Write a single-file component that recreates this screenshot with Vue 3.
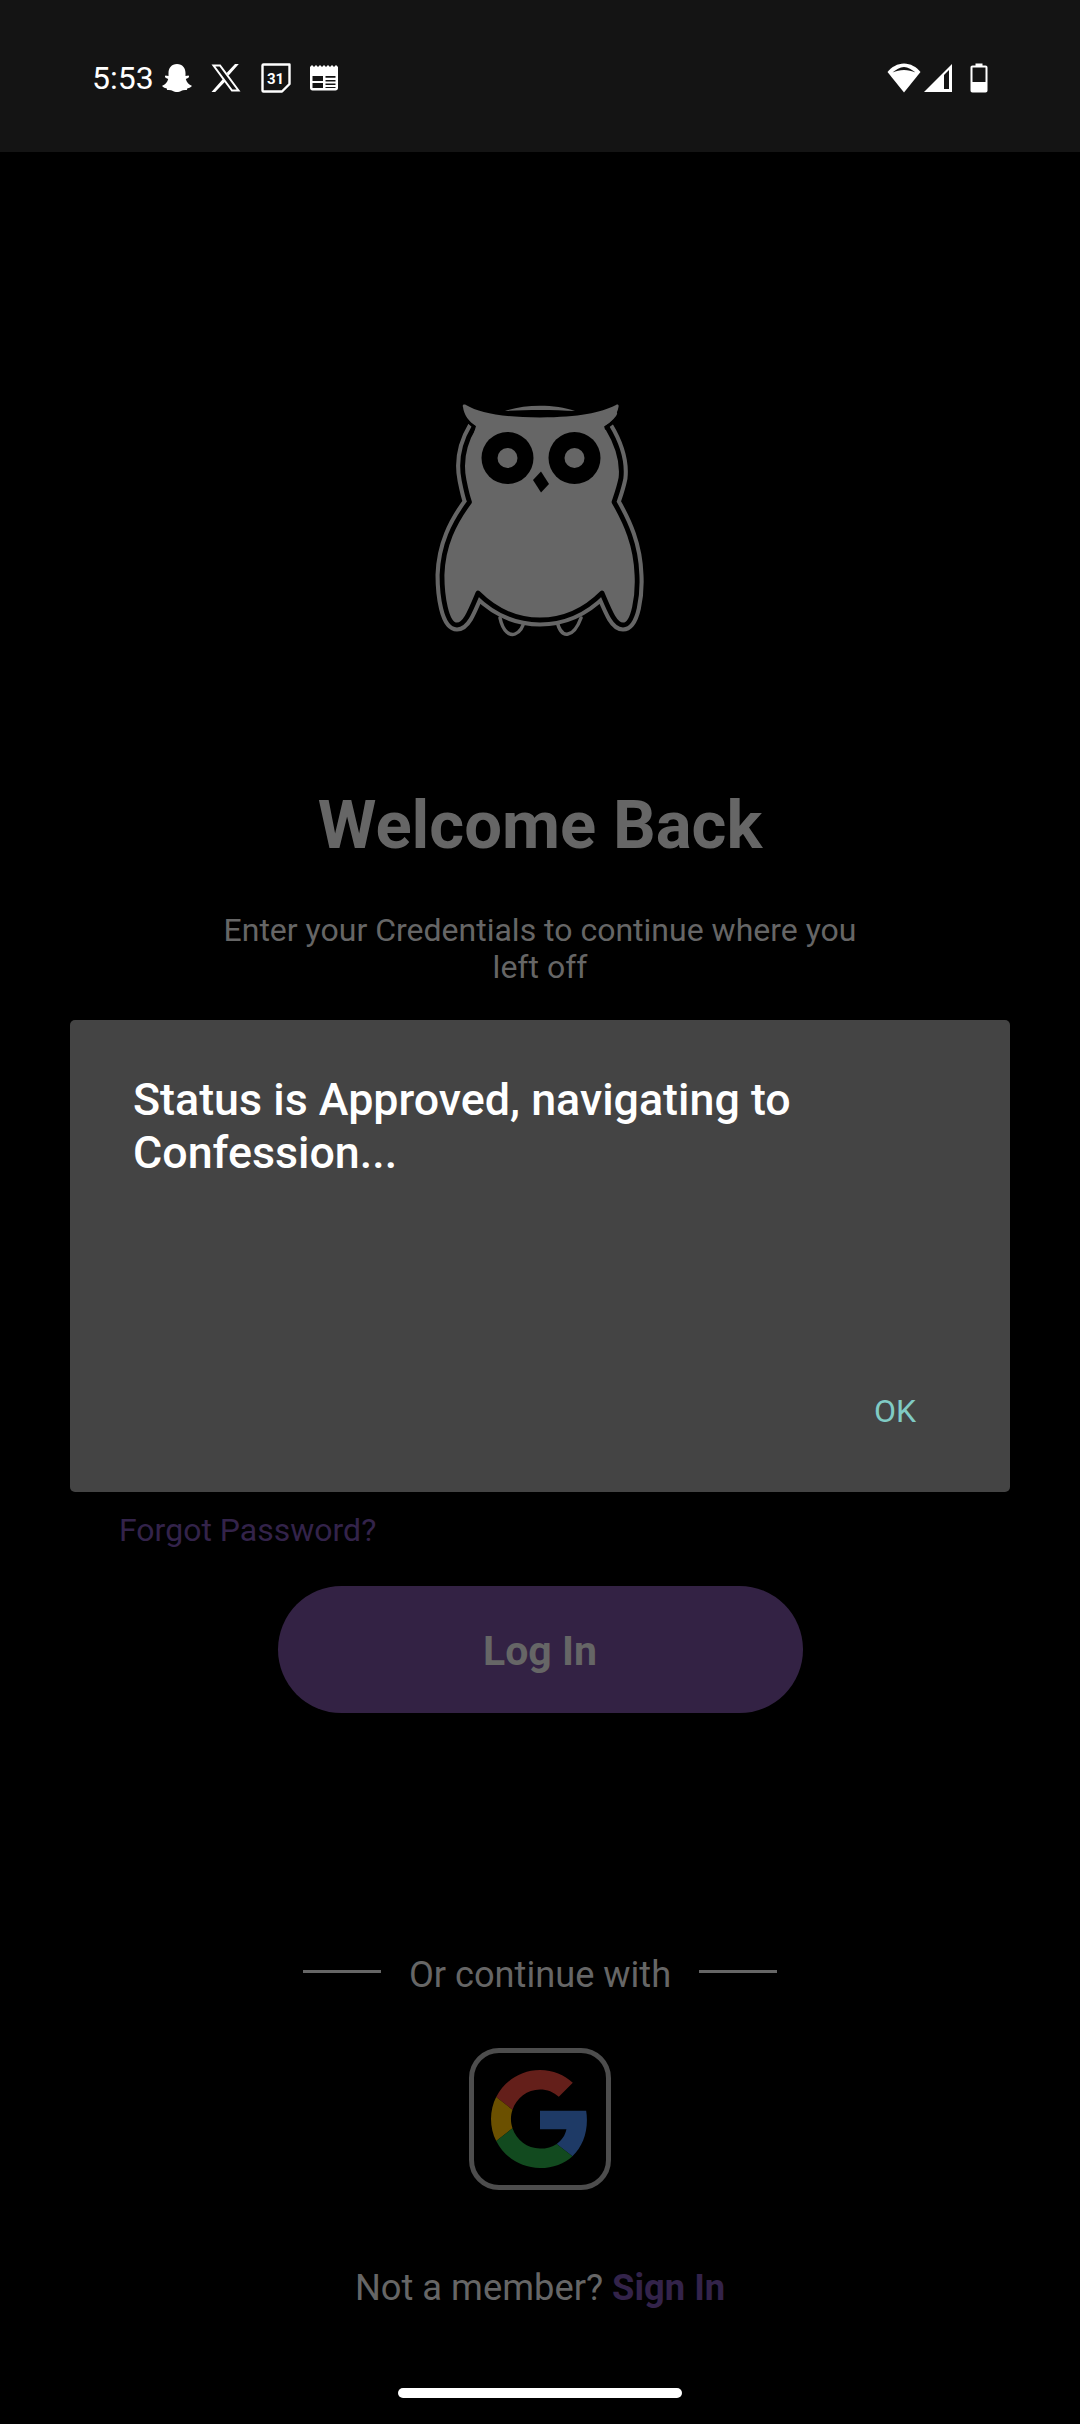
<script setup>
const bodyPath = 'M64 47C55 62 50 80 54 100C56 110 58 118 59.500 122C44 143 33 165 32 195C32 215 36 245 47 245C55 245 60 232 68 213C88 233 110 240 130 240C150 240 172 233 192 213C200 232 205 245 213 245C224 245 228 215 227 195C226 165 216 143 204 122C206 116 209 108 211 98C213 80 206 62 197 47'
</script>

<template>
  <div class="screen">
    <div class="status-bar">
      <span class="time">5:53</span>
      <svg class="ic-snap" width="30" height="30" viewBox="0 0 30 30">
        <path fill="#fff" d="M15 1C20.500 1 23.500 5 23.500 10L23.500 13L26.500 12.500C27.500 13 27 14.500 26 15L23.800 16C24.500 19 27 21.800 29.800 22.800C30 24 27.500 25 25.500 25.300L24.800 27C22.500 26.700 20.500 27 19 28C17 29.400 13 29.400 11 28C9.500 27 7.500 26.700 5.200 27L4.500 25.300C2.500 25 0 24 0.200 22.800C3 21.800 5.500 19 6.200 16L4 15C3 14.500 2.500 13 3.500 12.500L6.500 13L6.500 10C6.500 5 9.500 1 15 1Z"/>
      </svg>
      <svg class="ic-x" width="30" height="28" viewBox="0 0 30 28">
        <path fill="none" stroke="#fff" stroke-width="2" d="M2.500 1.500H9L27.500 26.500H21Z"/>
        <path fill="#fff" d="M24 0H27.800L17.600 11.500L15.600 9ZM12.200 14.800L14.200 17.400L4.200 28H0.500Z"/>
      </svg>
      <svg class="ic-cal" width="30" height="30" viewBox="0 0 30 30">
        <path fill="none" stroke="#fff" stroke-width="2.400" stroke-linejoin="round" d="M2.500 1.500H28.500V21L21 28.500H2.500C1.800 28.500 1.500 28 1.500 27.500V2.500C1.500 2 1.800 1.500 2.500 1.500Z"/>
        <text x="14.500" y="20.500" text-anchor="middle" class="cal-num">31</text>
      </svg>
      <svg class="ic-news" width="28" height="26" viewBox="0 0 28 26">
        <path fill="#fff" d="M0 2L2 0L4 2L6 0L8 2L10 0L12 2L14 0L16 2L18 0L20 2L22 0L24 2L26 0L28 2V23C28 24.500 27 25.500 25.500 25.500H2.500C1 25.500 0 24.500 0 23Z"/>
        <path fill="#141414" d="M2.500 11H13V16H2.500ZM2.500 18H13V23H2.500ZM15.500 11H25.500V12.800H15.500ZM15.500 15H25.500V16.500H15.500ZM15.500 18.500H25.500V20H15.500ZM15.500 22H25.500V23H15.500Z"/>
      </svg>
      <div class="status-right">
        <svg width="34" height="30" viewBox="0 0 34 30">
          <path fill="#fff" d="M17 29.500L0.500 9C4.500 4 10.500 0.500 17 0.500C23.500 0.500 29.500 4 33.500 9Z"/>
          <path fill="#141414" d="M5.500 9.500C9 6.500 13 4 17 4C21 4 25 6.500 28.500 9.500C25 8 21 7 17 7C13 7 9 8 5.500 9.500Z"/>
        </svg>
        <svg class="ic-signal" width="28" height="28" viewBox="0 0 28 28">
          <path fill="#fff" d="M28 0V28H0Z"/>
          <path fill="#141414" d="M20 11L25 6V25H20Z"/>
        </svg>
        <svg class="ic-batt" width="18" height="30" viewBox="0 0 18 30">
          <path fill="#fff" d="M5.500 0.500H12.500V2.500H15.500C16.800 2.500 17.500 3.300 17.500 4.500V27.500C17.500 28.700 16.800 29.500 15.500 29.500H2.500C1.200 29.500 0.500 28.700 0.500 27.500V4.500C0.500 3.300 1.200 2.500 2.500 2.500H5.500Z"/>
          <path fill="#141414" d="M2.500 4.500H15.500V19H2.500Z"/>
        </svg>
      </div>
    </div>

    <svg class="owl" width="260" height="270" viewBox="0 0 260 270">
      <path fill="#666" d="M95 31C115 24 145 24 165 31C145 29.500 115 29.500 95 31Z"/>
      <path fill="none" stroke="#666" stroke-width="3.500" stroke-linecap="round" d="M90 238C93 252 100 256 105 254C110 252 113 247 114 241M147 241C149 250 153 255 158 254C164 253 168 246 171 238"/>
      <path :d="bodyPath" fill="none" stroke="#666" stroke-width="13" stroke-linejoin="round"/>
      <path :d="bodyPath" fill="#666" stroke="#000" stroke-width="4.800" stroke-linejoin="round"/>
      <path fill="#666" stroke="#000" stroke-width="3.500" stroke-linejoin="round" d="M66 48C61 44 56 40 54 35L55 25C60 30 75 36 92 37C115 38 145 38 168 37C185 36 200 30 207 25L209 34C207 40 201 44 195 48C170 50 90 50 66 48Z"/>
      <path fill="#666" d="M53 27C52 25 54 24 56 25C70 33 90 37 130 37.500C170 37 190 33 206 25C208 24 209 25 208.500 27C207 35 202 42 194 46L198 60H62L66 46C59 42 54 35 53 27Z"/>
      <circle cx="97.500" cy="78" r="26" fill="#000"/>
      <circle cx="97.500" cy="78" r="10" fill="#666"/>
      <circle cx="164.500" cy="78" r="26" fill="#000"/>
      <circle cx="164.500" cy="78" r="10" fill="#666"/>
      <path fill="#000" d="M131 91.500L139 104L131 112.500L123 100Z"/>
    </svg>

    <h1 class="title">Welcome Back</h1>
    <p class="subtitle">Enter your Credentials to continue where you<br>left off</p>

    <div class="forgot">Forgot Password?</div>
    <div class="login">Log In</div>

    <div class="or-row">
      <span class="or-line"></span>
      <span class="or-text">Or continue with</span>
      <span class="or-line"></span>
    </div>

    <div class="google">
      <svg width="98" height="98" viewBox="0 0 48 48">
        <path fill="#641f1a" d="M24 9.500c3.540 0 6.710 1.220 9.210 3.600l6.850-6.850C35.900 2.380 30.470 0 24 0 14.620 0 6.510 5.380 2.560 13.220l7.980 6.190C12.430 13.720 17.740 9.500 24 9.500z"/>
        <path fill="#1e3a66" d="M46.980 24.550c0-1.570-.15-3.090-.38-4.550H24v9.020h12.940c-.58 2.960-2.260 5.480-4.780 7.180l7.730 6c4.510-4.180 7.090-10.360 7.090-17.650z"/>
        <path fill="#6b5000" d="M10.530 28.590c-.48-1.450-.76-2.990-.76-4.590s.27-3.140.76-4.590l-7.980-6.190C.92 16.460 0 20.120 0 24c0 3.880.92 7.540 2.560 10.780l7.970-6.190z"/>
        <path fill="#124a1f" d="M24 48c6.480 0 11.930-2.130 15.890-5.810l-7.730-6c-2.150 1.450-4.920 2.300-8.160 2.300-6.260 0-11.570-4.220-13.470-9.910l-7.980 6.190C6.510 42.620 14.620 48 24 48z"/>
      </svg>
    </div>

    <div class="member">Not a member? <span class="sign-in">Sign In</span></div>
    <div class="home-bar"></div>

    <div class="dialog">
      <div class="dialog-title">Status is Approved, navigating to Confession...</div>
      <div class="dialog-ok">OK</div>
    </div>
  </div>
</template>

<style scoped>
.screen {
  position: relative;
  width: 1080px;
  height: 2424px;
  overflow: hidden;
  background: #000;
  display: flex;
  flex-direction: column;
  align-items: center;
  font-family: Roboto, "Liberation Sans", sans-serif;
}

.status-bar {
  align-self: stretch;
  height: 152px;
  box-sizing: border-box;
  background: #141414;
  display: flex;
  align-items: center;
  padding: 4px 92px 0 92px;
  color: #fff;
}
.time {
  font-size: 32px;
  font-weight: 400;
  line-height: 30px;
  margin-right: 8px;
}
.status-bar svg { display: block; }
.ic-x { margin-left: 19px; }
.ic-cal { margin-left: 20px; }
.cal-num {
  font-family: Roboto, sans-serif;
  font-size: 15px;
  font-weight: 700;
  fill: #fff;
}
.ic-news { margin-left: 19px; }
.status-right {
  margin-left: auto;
  display: flex;
  align-items: center;
}
.ic-signal { margin-left: 3px; }
.ic-batt { margin-left: 18px; }

.owl {
  display: block;
  margin-top: 228px;
}
.title {
  margin: 137px 0 0;
  font-size: 67px;
  line-height: 76px;
  font-weight: 700;
  color: #666;
}
.subtitle {
  margin: 49px 0 0;
  font-size: 32px;
  line-height: 37px;
  text-align: center;
  color: #666;
}
.forgot {
  align-self: flex-start;
  margin: 524px 0 0 119px;
  font-size: 32px;
  line-height: 40px;
  color: #33234a;
}
.login {
  margin-top: 36px;
  width: 525px;
  height: 127px;
  border-radius: 64px;
  background: #332244;
  color: #666;
  font-size: 41px;
  font-weight: 700;
  line-height: 130px;
  text-align: center;
}
.or-row {
  margin-top: 240px;
  display: flex;
  align-items: center;
  gap: 28px;
}
.or-line {
  width: 78px;
  height: 3px;
  margin-top: -7px;
  background: #666;
}
.or-text {
  font-size: 36.200px;
  line-height: 44px;
  color: #666;
}
.google {
  margin-top: 51px;
  width: 142px;
  height: 142px;
  box-sizing: border-box;
  border: 5px solid #4d4d4d;
  border-radius: 30px;
  display: flex;
  align-items: center;
  justify-content: center;
}
.member {
  margin-top: 76px;
  font-size: 36.300px;
  line-height: 44px;
  color: #666;
}
.sign-in {
  color: #33234a;
  font-weight: 700;
}
.home-bar {
  margin-top: 78px;
  width: 284px;
  height: 10px;
  border-radius: 5px;
  background: #fff;
}

.dialog {
  position: absolute;
  left: 70px;
  top: 1020px;
  width: 940px;
  height: 472px;
  box-sizing: border-box;
  padding: 53px 63px 0;
  background: #444;
  border-radius: 5px;
  display: flex;
  flex-direction: column;
}
.dialog-title {
  font-size: 44.800px;
  line-height: 53px;
  font-weight: 500;
  color: #fff;
}
.dialog-ok {
  margin-top: auto;
  margin-bottom: 61px;
  align-self: flex-end;
  margin-right: 31px;
  font-size: 32px;
  line-height: 40px;
  color: #80cbc4;
}
</style>

<style>
html, body { background: #000; }
</style>
